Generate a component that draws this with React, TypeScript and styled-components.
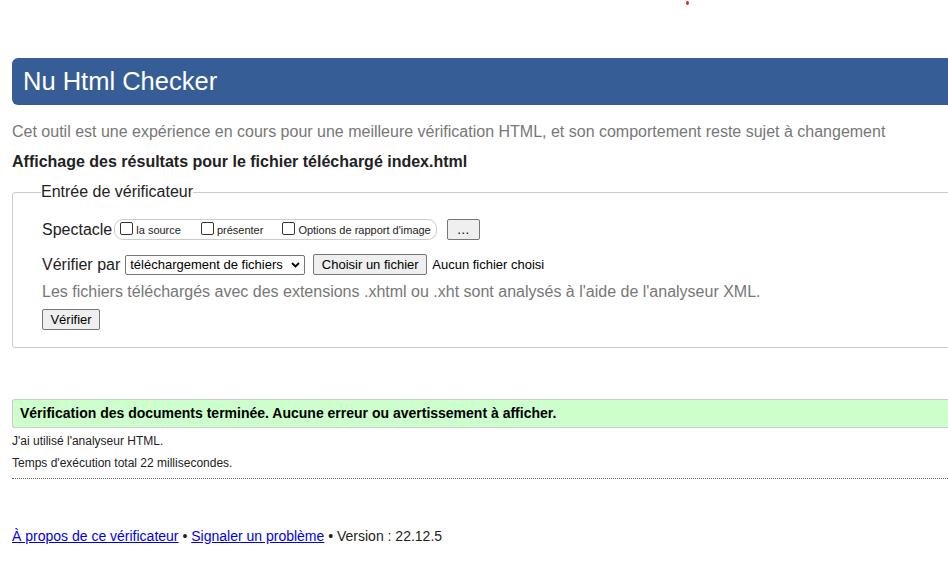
import React from 'react';
import styled, { createGlobalStyle } from 'styled-components';

const GlobalStyle = createGlobalStyle`
  html, body {
    margin: 0;
    padding: 0;
    overflow: hidden;
    background: #fff;
  }
  body {
    font-family: "Liberation Sans", Arial, sans-serif;
    color: #222;
  }
`;

const Page = styled.div`
  position: relative;
  width: 1000px;
  padding: 58px 0 0 12px;
`;

const RedDot = styled.span`
  position: absolute;
  left: 686px;
  top: 1px;
  width: 3px;
  height: 4px;
  border-radius: 50%;
  background: #e8232b;
`;

const Header = styled.h1`
  margin: 0;
  height: 47px;
  line-height: 47px;
  padding-left: 11px;
  background: #365d96;
  color: #fff;
  font-size: 25.5px;
  font-weight: normal;
  border-radius: 6px 0 0 6px;
`;

const Intro = styled.p`
  margin: 18px 0 0;
  font-size: 16px;
  line-height: 18px;
  color: #777;
`;

const ResultTitle = styled.h2`
  margin: 12px 0 0;
  font-size: 16px;
  line-height: 18px;
  font-weight: bold;
  color: #222;
`;

const Fieldset = styled.fieldset`
  margin: 12px 0 0;
  padding: 0 0 17px 29px;
  border: 1px solid #ccc;
  border-radius: 3px;
`;

const Legend = styled.legend`
  padding: 0;
  margin-left: -1px;
  font-size: 16px;
  line-height: 18px;
  color: #222;
`;

const Row = styled.div<{ $top: number }>`
  display: flex;
  align-items: center;
  margin-top: ${p => p.$top}px;
  font-size: 16px;
  color: #222;
`;

const Label = styled.span`
  font-size: 16px;
  margin-right: 2px;
`;

const Options = styled.div`
  display: flex;
  align-items: center;
  height: 19px;
  padding: 0 5px 0 5px;
  border: 1px solid #ccc;
  border-radius: 9px;
`;

const Option = styled.label<{ $gap: number }>`
  display: flex;
  align-items: center;
  font-size: 11px;
  margin-right: ${p => p.$gap}px;
  &:last-child { margin-right: 0; }
`;

const Check = styled.span`
  display: inline-block;
  width: 11px;
  height: 11px;
  border: 1px solid #333;
  border-radius: 2px;
  margin: 0 3px 2px 0;
  background: #fff;
`;

const Button = styled.button<{ $w: number; $ml?: number }>`
  width: ${p => p.$w}px;
  height: 21px;
  margin-left: ${p => p.$ml ?? 0}px;
  padding: 0;
  font-family: "Liberation Sans", Arial, sans-serif;
  font-size: 13px;
  color: #000;
  background: #efefef;
  border: 1px solid #767676;
  border-radius: 2px;
`;

const Select = styled.div`
  display: flex;
  align-items: center;
  justify-content: space-between;
  box-sizing: border-box;
  width: 180px;
  height: 20px;
  margin: 0 8px 0 3px;
  padding: 0 4px 0 4px;
  border: 1px solid #767676;
  border-radius: 2px;
  font-size: 13px;
  color: #000;
`;

const FileName = styled.span`
  margin-left: 5px;
  font-size: 13px;
  color: #000;
`;

const Help = styled.p`
  margin: 8px 0 0;
  font-size: 16px;
  line-height: 18px;
  color: #777;
`;

const Success = styled.div`
  margin-top: 51px;
  height: 27px;
  line-height: 27px;
  padding-left: 7px;
  background: #ccffcc;
  border: 1px solid #ccc;
  border-right: none;
  border-radius: 3px 0 0 3px;
  font-size: 14px;
  font-weight: bold;
  color: #000;
`;

const Detail = styled.p<{ $top: number }>`
  margin: ${p => p.$top}px 0 0;
  font-size: 12px;
  line-height: 14px;
  color: #222;
`;

const Rule = styled.hr`
  margin: 8px 0 0;
  border: none;
  border-top: 1px dotted #666;
`;

const Footer = styled.p`
  margin: 49px 0 0;
  font-size: 14px;
  line-height: 16px;
  color: #222;
  a { color: #0000ee; }
`;

function Chevron() {
  return (
    <svg width="9" height="6" viewBox="0 0 9 6">
      <path d="M1 1l3.5 3.5L8 1" fill="none" stroke="#000" strokeWidth="1.8" />
    </svg>
  );
}

export default function App() {
  return (
    <>
      <GlobalStyle />
      <Page>
        <RedDot />
        <Header>Nu Html Checker</Header>
        <Intro>
          Cet outil est une expérience en cours pour une meilleure vérification HTML, et son comportement reste sujet à changement
        </Intro>
        <ResultTitle>Affichage des résultats pour le fichier téléchargé index.html</ResultTitle>

        <Fieldset>
          <Legend>Entrée de vérificateur</Legend>
          <Row $top={18}>
            <Label>Spectacle</Label>
            <Options>
              <Option $gap={20}><Check />la source</Option>
              <Option $gap={19}><Check />présenter</Option>
              <Option $gap={0}><Check />Options de rapport d'image</Option>
            </Options>
            <Button $w={33} $ml={10}>…</Button>
          </Row>
          <Row $top={14}>
            <Label>Vérifier par</Label>
            <Select>
              téléchargement de fichiers
              <Chevron />
            </Select>
            <Button $w={114}>Choisir un fichier</Button>
            <FileName>Aucun fichier choisi</FileName>
          </Row>
          <Help>
            Les fichiers téléchargés avec des extensions .xhtml ou .xht sont analysés à l'aide de l'analyseur XML.
          </Help>
          <Row $top={8}>
            <Button $w={58}>Vérifier</Button>
          </Row>
        </Fieldset>

        <Success>Vérification des documents terminée. Aucune erreur ou avertissement à afficher.</Success>
        <Detail $top={6}>J'ai utilisé l'analyseur HTML.</Detail>
        <Detail $top={8}>Temps d'exécution total 22 millisecondes.</Detail>
        <Rule />

        <Footer>
          <a href="#about">À propos de ce vérificateur</a> • <a href="#report">Signaler un problème</a> • Version : 22.12.5
        </Footer>
      </Page>
    </>
  );
}
